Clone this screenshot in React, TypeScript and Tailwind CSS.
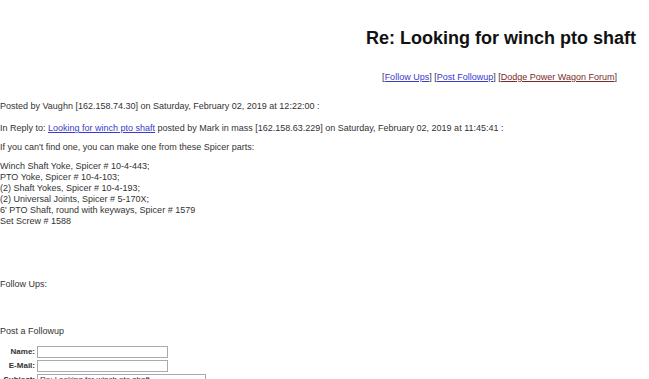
export default function App() {
  const parts = [
    "Winch Shaft Yoke, Spicer # 10-4-443;",
    "PTO Yoke, Spicer # 10-4-103;",
    "(2) Shaft Yokes, Spicer # 10-4-193;",
    "(2) Universal Joints, Spicer # 5-170X;",
    "6' PTO Shaft, round with keyways, Spicer # 1579",
    "Set Screw # 1588",
  ];

  return (
    <div className="w-[649px] h-[379px] overflow-hidden bg-white text-[#333] font-['Liberation_Sans',Arial,sans-serif] text-[9px] leading-[11px]">
      <h1 className="mt-[27px] h-[22px] pr-[13px] text-right text-[18px] leading-[22px] font-bold text-[#111]">
        Re: Looking for winch pto shaft
      </h1>

      <div className="mt-[23px] pr-[32px] text-right">
        [<a className="text-[#3a3acc] underline">Follow Ups</a>]{" "}
        [<a className="text-[#3a3acc] underline">Post Followup</a>]{" "}
        [<a className="text-[#7a2a2a] underline">Dodge Power Wagon Forum</a>]
      </div>

      <p className="mt-[18px]">
        Posted by Vaughn [162.158.74.30] on Saturday, February 02, 2019 at 12:22:00 :
      </p>
      <p className="mt-[11px]">
        In Reply to: <a className="text-[#3a3acc] underline">Looking for winch pto shaft</a> posted by Mark in mass [162.158.63.229] on Saturday, February 02, 2019 at 11:45:41 :
      </p>
      <p className="mt-[8px]">If you can't find one, you can make one from these Spicer parts:</p>

      <div className="mt-[8px]">
        {parts.map((p) => (
          <div key={p}>{p}</div>
        ))}
      </div>

      <p className="mt-[52px]">Follow Ups:</p>
      <p className="mt-[36px]">Post a Followup</p>

      <div className="mt-[9px] flex flex-col gap-[2px] text-[8px] leading-[12px]">
        <div className="flex items-center gap-[2px]">
          <span className="w-[35px] text-right font-bold">Name:</span>
          <span className="h-[12px] w-[131px] border border-[#aaa] bg-white" />
        </div>
        <div className="flex items-center gap-[2px]">
          <span className="w-[35px] text-right font-bold">E-Mail:</span>
          <span className="h-[12px] w-[131px] border border-[#aaa] bg-white" />
        </div>
        <div className="flex items-center gap-[2px]">
          <span className="w-[35px] text-right font-bold">Subject:</span>
          <span className="h-[12px] w-[169px] border border-[#aaa] bg-white px-[2px] text-[8px] leading-[10px]">
            Re: Looking for winch pto shaft
          </span>
        </div>
      </div>
    </div>
  );
}
